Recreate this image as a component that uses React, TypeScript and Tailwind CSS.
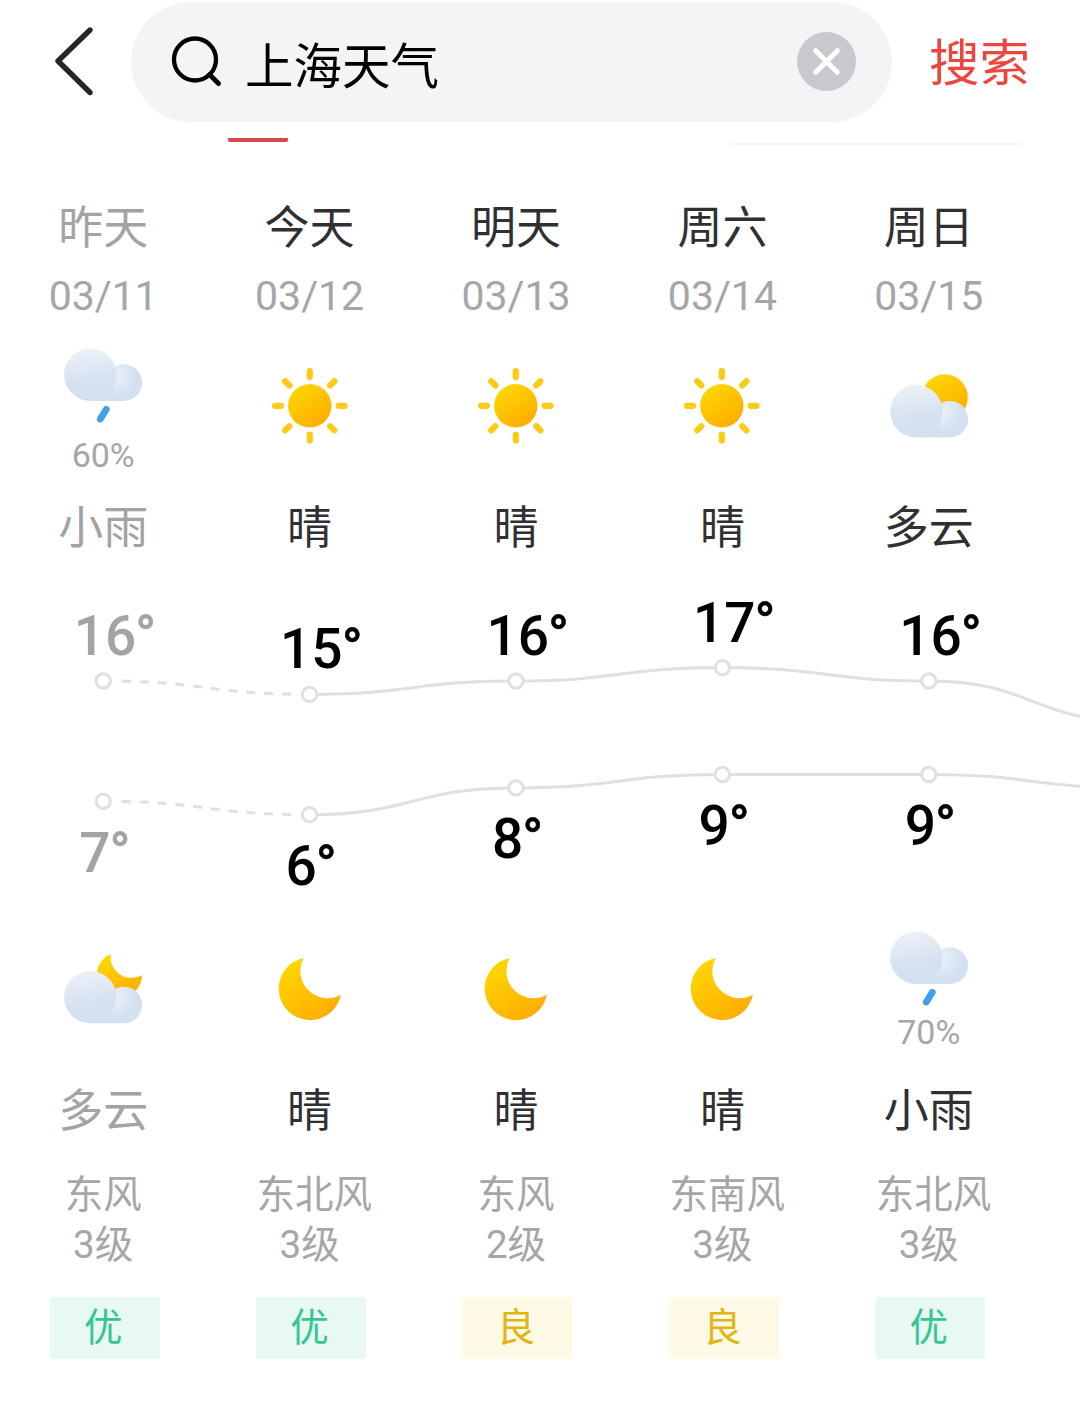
import { clsx } from 'clsx';

type Weather = 'sunny' | 'partlyDay' | 'partlyNight' | 'rain' | 'moon';

type DayForecast = {
  name: string;
  date: string;
  past?: boolean;
  day: { icon: Weather; label: string; chance?: string };
  night: { icon: Weather; label: string; chance?: string };
  high: number;
  low: number;
  wind: string;
  level: string;
  air: '优' | '良';
};

const days: DayForecast[] = [
  {
    name: '昨天',
    date: '03/11',
    past: true,
    day: { icon: 'rain', label: '小雨', chance: '60%' },
    night: { icon: 'partlyNight', label: '多云' },
    high: 16,
    low: 7,
    wind: '东风',
    level: '3级',
    air: '优',
  },
  {
    name: '今天',
    date: '03/12',
    day: { icon: 'sunny', label: '晴' },
    night: { icon: 'moon', label: '晴' },
    high: 15,
    low: 6,
    wind: '东北风',
    level: '3级',
    air: '优',
  },
  {
    name: '明天',
    date: '03/13',
    day: { icon: 'sunny', label: '晴' },
    night: { icon: 'moon', label: '晴' },
    high: 16,
    low: 8,
    wind: '东风',
    level: '2级',
    air: '良',
  },
  {
    name: '周六',
    date: '03/14',
    day: { icon: 'sunny', label: '晴' },
    night: { icon: 'moon', label: '晴' },
    high: 17,
    low: 9,
    wind: '东南风',
    level: '3级',
    air: '良',
  },
  {
    name: '周日',
    date: '03/15',
    day: { icon: 'partlyDay', label: '多云' },
    night: { icon: 'rain', label: '小雨', chance: '70%' },
    high: 16,
    low: 9,
    wind: '东北风',
    level: '3级',
    air: '优',
  },
];

// The sixth day is off screen, only its curve is visible
const nextDay = { high: 13, low: 8 };

const COL = 206.4;
const STEP = 13.4;

const colX = (i: number) => COL / 2 + COL * i;
const highY = (t: number) => 681 + (16 - t) * STEP;
const lowY = (t: number) => 774.5 + (9 - t) * STEP;

function Gradients() {
  return (
    <svg className="absolute h-0 w-0" aria-hidden="true">
      <defs>
        <linearGradient id="sun" x1="0.15" y1="0" x2="0.85" y2="1">
          <stop offset="0" stopColor="#ffd900" />
          <stop offset="1" stopColor="#ffa903" />
        </linearGradient>
        <linearGradient id="cloud" gradientUnits="userSpaceOnUse" x1="18" y1="0" x2="26" y2="52">
          <stop offset="0" stopColor="#edf1f7" />
          <stop offset="0.65" stopColor="#d5e1f0" />
          <stop offset="1" stopColor="#d3e0f0" />
        </linearGradient>
        <radialGradient id="puff" gradientUnits="userSpaceOnUse" cx="52" cy="27" r="21">
          <stop offset="0" stopColor="#e9eff8" />
          <stop offset="0.35" stopColor="#e3ebf6" />
          <stop offset="1" stopColor="#d3e0f0" />
        </radialGradient>
      </defs>
    </svg>
  );
}

function Cloud({ y }: { y: number }) {
  return (
    <g transform={`translate(1 ${y})`}>
      <path d="M26.3 30H60V52.5H26.3Z" fill="url(#cloud)" />
      <circle cx="59.8" cy="34.2" r="18.3" fill="url(#puff)" />
      <circle cx="26.3" cy="26.3" r="26.2" fill="url(#cloud)" />
    </g>
  );
}

function WeatherIcon({ icon }: { icon: Weather }) {
  return (
    <svg className="h-20 w-20 shrink-0" viewBox="0 0 80 80">
      {icon === 'sunny' && (
        <>
          <circle cx="39.8" cy="39.8" r="21.7" fill="url(#sun)" />
          {[0, 45, 90, 135, 180, 225, 270, 315].map((angle) => (
            <line
              key={angle}
              x1="39.8"
              y1="5"
              x2="39.8"
              y2="11"
              stroke="#fccb16"
              strokeWidth="6.2"
              strokeLinecap="round"
              transform={`rotate(${angle} 39.8 39.8)`}
            />
          ))}
        </>
      )}
      {icon === 'moon' && (
        <path d="M33.7 8.9A31.4 31.4 0 1 0 70.9 45.7A27.2 27.2 0 0 1 33.7 8.9Z" fill="url(#sun)" />
      )}
      {icon === 'partlyDay' && (
        <>
          <circle cx="55.8" cy="31.3" r="23" fill="url(#sun)" />
          <Cloud y={19} />
        </>
      )}
      {icon === 'partlyNight' && (
        <>
          <path d="M47.7 5A22.6 22.6 0 1 0 79 26.2A21 21 0 0 1 47.7 5Z" fill="url(#sun)" />
          <Cloud y={21.8} />
        </>
      )}
      {icon === 'rain' && (
        <>
          <Cloud y={2.4} />
          <path d="M43.3 63.3L37.3 73" stroke="#40a1e8" strokeWidth="6.8" strokeLinecap="round" />
        </>
      )}
    </svg>
  );
}

function WeatherCell({
  data,
  past,
  night,
}: {
  data: DayForecast['day'];
  past?: boolean;
  night?: boolean;
}) {
  return (
    <div className="flex flex-col items-center">
      <div className={clsx('flex h-[140px] flex-col items-center', !data.chance && 'pt-5')}>
        <WeatherIcon icon={data.icon} />
        {data.chance && (
          <span
            className={clsx(
              'text-[34px] leading-10 text-[#a6a6a8]',
              night ? 'mt-[3px]' : 'mt-[9px]'
            )}
          >
            {data.chance}
          </span>
        )}
      </div>
      <span
        className={clsx(
          'mt-[13px] text-[45px] leading-[60px]',
          past ? 'text-[#a3a3a5]' : 'text-[#303032]'
        )}
      >
        {data.label}
      </span>
    </div>
  );
}

function curve(values: number[], toY: (t: number) => number, start: number) {
  return values
    .map((v, i) => {
      const x = colX(start + i);
      if (i === 0) return `M${x} ${toY(v)}`;
      const mid = x - COL / 2;
      return `C${mid} ${toY(values[i - 1])} ${mid} ${toY(v)} ${x} ${toY(v)}`;
    })
    .join('');
}

function TemperatureChart() {
  const series = [
    { key: 'high' as const, toY: highY, labelOffset: -26 },
    { key: 'low' as const, toY: lowY, labelOffset: 70.5 },
  ];

  return (
    <svg className="mt-5 h-80 w-[1080px]" viewBox="0 579 1080 320">
      {series.map(({ key, toY, labelOffset }) => {
        const values = [...days.map((d) => d[key]), nextDay[key]];
        return (
          <g key={key}>
            <path
              d={curve(values.slice(0, 2), toY, 0)}
              fill="none"
              stroke="#e0e0e2"
              strokeWidth="3"
              strokeDasharray="0 18.5 9 8.9 9 8.9 9 8.9 9 8.9 9 8.9 9 8.9 9 8.9 9 8.9 9 8.9 9 100"
            />
            <path
              d={curve(values.slice(1), toY, 1)}
              fill="none"
              stroke="#e0e0e2"
              strokeWidth="3"
            />
            {days.map((d, i) => {
              const color = d.past ? '#a3a3a5' : '#000';
              return (
                <g key={d.date}>
                  <circle
                    cx={colX(i)}
                    cy={toY(d[key])}
                    r="7.2"
                    fill="#fff"
                    stroke="#e0e0e2"
                    strokeWidth="3"
                  />
                  <text
                    x={colX(i) - (d[key] > 9 ? 29.5 : 24)}
                    y={toY(d[key]) + labelOffset}
                    className="text-[55px] font-medium"
                    fill={color}
                  >
                    {d[key]}
                    <tspan dx="-1" stroke={color} strokeWidth="0.6">
                      °
                    </tspan>
                  </text>
                </g>
              );
            })}
          </g>
        );
      })}
    </svg>
  );
}

function SearchBar() {
  return (
    <header className="flex h-[122px] items-center pt-px">
      <button className="ml-[52px] shrink-0">
        <svg className="h-[72px] w-11" viewBox="0 0 44 72" fill="none">
          <path
            d="M38 4L6 35L38 66.5"
            stroke="#262626"
            strokeWidth="5.4"
            strokeLinecap="round"
            strokeLinejoin="round"
          />
        </svg>
      </button>
      <div className="ml-[35px] flex h-[120px] w-[761px] shrink-0 items-center rounded-full bg-[#f3f4f6] pr-9 pl-10">
        <svg className="h-[52px] w-[52px]" viewBox="0 0 52 52" fill="none" stroke="#000">
          <circle cx="24" cy="23.5" r="21" strokeWidth="4.3" />
          <path d="M38.5 38.5L47.5 47.5" strokeWidth="4.8" strokeLinecap="round" />
        </svg>
        <span className="mt-3 ml-[22px] flex-1 text-[48.5px] leading-[60px] text-black">上海天气</span>
        <svg className="h-[59px] w-[59px]" viewBox="0 0 59 59">
          <circle cx="29.5" cy="29.5" r="29.5" fill="#c8c9cc" />
          <path
            d="M18.7 18.7L40.3 40.3M40.3 18.7L18.7 40.3"
            stroke="#fff"
            strokeWidth="5"
            strokeLinecap="round"
          />
        </svg>
      </div>
      <button className="mt-1 ml-[37px] shrink-0 text-[50.5px] leading-[60px] text-[#ee453f]">
        搜索
      </button>
    </header>
  );
}

export default function App() {
  return (
    <div className="relative h-[1414px] w-[1080px] overflow-hidden bg-white font-[Roboto,'Noto_Sans_CJK_SC',sans-serif]">
      <Gradients />
      <SearchBar />

      {/* bottom edge of the tabs, scrolled under the search bar */}
      <div className="flex h-[77px] items-start pt-4">
        <div className="ml-[228px] h-[3.5px] w-[60px] rounded-b-xs bg-[#d9484c]" />
        <div className="mt-[5px] ml-[442px] h-0.5 w-[291px] bg-[#f5f5f6]" />
      </div>

      <div className="grid w-[1032px] grid-cols-5">
        {days.map((d) => (
          <div key={d.date} className="flex flex-col items-center">
            <span
              className={clsx(
                'text-[45px] leading-[60px]',
                d.past ? 'text-[#a3a3a5]' : 'text-[#303032]'
              )}
            >
              {d.name}
            </span>
            <span className="mt-3 mb-[25px] text-[41px] leading-[50px] text-[#a6a6a8]">
              {d.date}
            </span>
            <WeatherCell data={d.day} past={d.past} />
          </div>
        ))}
      </div>

      <TemperatureChart />

      <div className="mt-[30px] grid w-[1032px] grid-cols-5">
        {days.map((d) => (
          <div key={d.date} className="flex flex-col items-center">
            <WeatherCell data={d.night} past={d.past} night />
            <div className="mt-7 w-[106px] text-center text-[38.5px] leading-[49.5px] whitespace-nowrap text-[#a6a6a8]">
              <p>{d.wind}</p>
              <p>{d.level}</p>
            </div>
            <div
              className={clsx(
                'mt-[28px] ml-[3px] h-[62px] w-[110px] rounded pr-[3px] text-center text-[38.5px] leading-[62px]',
                d.air === '优' ? 'bg-[#e8f9f4] text-[#35c692]' : 'bg-[#fef9e4] text-[#dfb616]'
              )}
            >
              {d.air}
            </div>
          </div>
        ))}
      </div>
    </div>
  );
}
